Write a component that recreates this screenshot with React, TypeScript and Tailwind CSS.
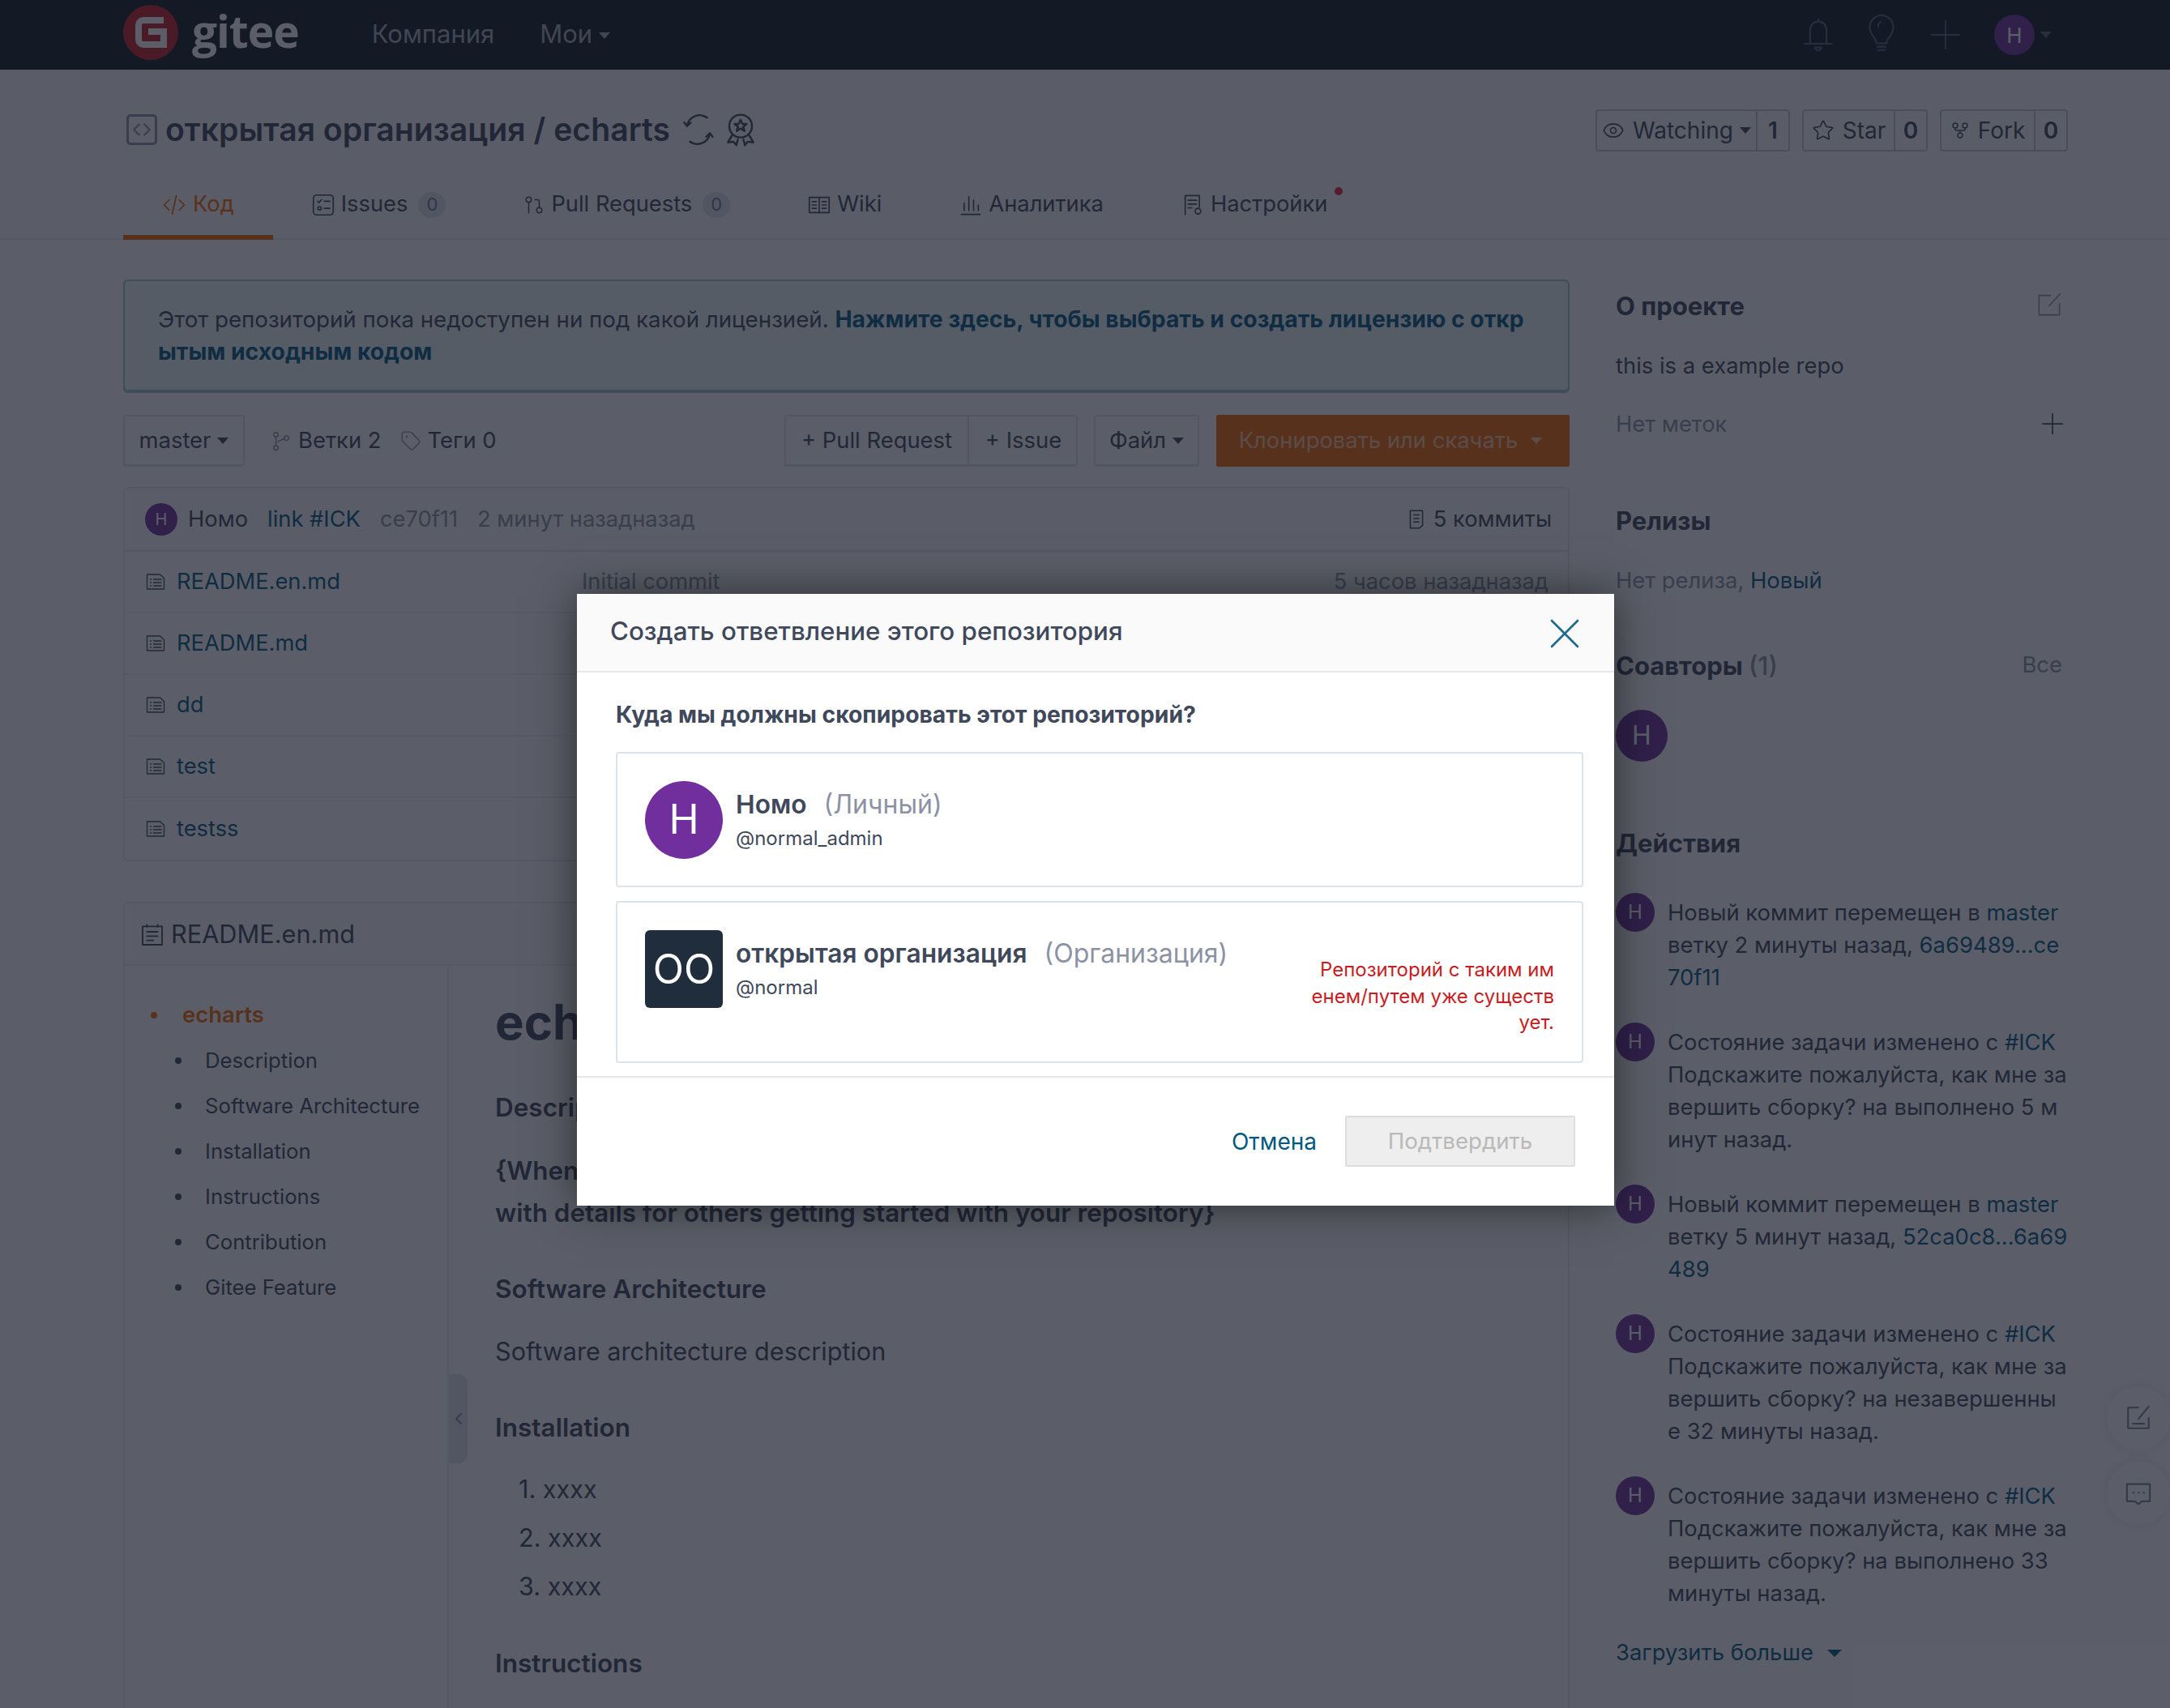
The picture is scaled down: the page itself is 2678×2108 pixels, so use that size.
import { ReactNode } from 'react';
import { Eye, GitFork, GitPullRequest, Plus, Star, Tag, X } from 'lucide-react';

const Svg = ({ className, children, stroke = 1.4 }: { className?: string; children: ReactNode; stroke?: number }) => (
  <svg viewBox="0 0 24 24" fill="none" stroke="currentColor" strokeWidth={stroke} strokeLinecap="round" strokeLinejoin="round" className={className}>
    {children}
  </svg>
);

const DocIcon = ({ className }: { className?: string }) => (
  <Svg className={className} stroke={1.3}>
    <path d="M1.500 3h16l5 4.500V21h-21z" />
    <path d="M5.500 9h1M5.500 13h1M5.500 17h1M9.500 9H19M9.500 13H19M9.500 17H19" />
  </Svg>
);

const Caret = ({ className }: { className?: string }) => (
  <span className={`inline-block h-0 w-0 border-x-[7px] border-t-[8px] border-x-transparent ${className ?? 'border-t-[#6b7280]'}`} />
);

const Avatar = ({ className }: { className: string }) => (
  <div className={`flex shrink-0 items-center justify-center rounded-full bg-[#702f9c] text-white ${className}`}>H</div>
);

const Logo = () => (
  <div className="-mt-[6px] flex items-center">
    <svg viewBox="0 0 68 68" className="h-[68px] w-[68px]">
      <circle cx="34" cy="34" r="34" fill="#c71d23" />
      <path d="M50 19H25a6 6 0 0 0-6 6v18a6 6 0 0 0 6 6h25V33H31" fill="none" stroke="#fff" strokeWidth="8" />
    </svg>
    <span className="-mt-[4px] ml-[17px] font-['Open_Sans'] text-[55px] leading-[68px] font-bold tracking-[-1px] text-white">gitee</span>
  </div>
);

const Header = () => (
  <header className="flex h-[86px] items-center bg-[#0f1c24] pl-[152px] pr-[146px]">
    <Logo />
    <span className="-mt-[2px] ml-[90px] text-[31px] text-[#a8aeba]">Компания</span>
    <span className="-mt-[2px] ml-[56px] flex items-center text-[31px] text-[#a8aeba]">
      Мои <Caret className="ml-[8px] mt-[4px] border-t-[#a8aeba]" />
    </span>
    <div className="ml-auto flex items-center text-[#58606e]">
      <Svg stroke={1.1} className="h-[44px] w-[44px]">
        <path d="M12 1.500v1.500M6.500 18V8.500a5.500 5.500 0 0 1 11 0V18M3 18h18M10 20.500a2 2 0 0 0 4 0z" />
      </Svg>
      <Svg stroke={1} className="ml-[31px] h-[50px] w-[50px]">
        <path d="M9 17c0-3-4-5-4-9.500a7 7 0 0 1 14 0C19 12 15 14 15 17zM9.500 19h5M10 21h4M10 7a2.500 2.500 0 0 1 1.500-2.500" />
      </Svg>
      <Plus strokeWidth={0.8} className="ml-[25px] h-[58px] w-[58px]" />
      <Avatar className="ml-[31px] h-[50px] w-[50px] text-[26px]" />
      <Caret className="ml-[7px] border-t-[#58606e]" />
    </div>
  </header>
);

const CountButton = ({ icon, label, count, caret, width }: { icon: ReactNode; label: string; count: string; caret?: boolean; width: string }) => (
  <div className={`flex h-[52px] items-stretch rounded-[4px] border-2 border-[#c5cad3] text-[28px] text-[#40485b] ${width}`}>
    <span className="flex flex-1 items-center justify-center gap-[10px]">
      {icon}
      {label}
      {caret && <Caret className="-ml-[2px] border-t-[#40485b]" />}
    </span>
    <span className="flex w-[40px] items-center justify-center border-l-2 border-[#c5cad3] font-semibold">{count}</span>
  </div>
);

const tabs: { label: string; count?: string; icon: ReactNode }[] = [
  { label: 'Код', icon: <Svg className="h-[30px] w-[30px]"><path d="M7 7l-5 5 5 5M17 7l5 5-5 5M14 3l-4 18" /></Svg> },
  {
    label: 'Issues',
    count: '0',
    icon: (
      <Svg className="h-[28px] w-[28px]">
        <rect x="1.500" y="1.500" width="21" height="21" rx="3.500" />
        <path d="M6 8l1.500 1.500L10 6.500M13 8h6M13 15.500h6" />
        <circle cx="8" cy="15.500" r="1.800" />
      </Svg>
    ),
  },
  { label: 'Pull Requests', count: '0', icon: <GitPullRequest strokeWidth={1.4} className="h-[26px] w-[26px]" /> },
  {
    label: 'Wiki',
    icon: (
      <Svg className="h-[28px] w-[28px]">
        <path d="M1.500 4h21v16h-21zM12 4v16M4.500 8.500h4.500M4.500 12h4.500M4.500 15.500h4.500M15 8.500h4.500M15 12h4.500M15 15.500h4.500" />
      </Svg>
    ),
  },
  { label: 'Аналитика', icon: <Svg className="h-[28px] w-[28px]"><path d="M2 22h20M5 18V10M10 18V3M15 18V7M20 18v-6" /></Svg> },
  {
    label: 'Настройки',
    icon: (
      <Svg className="h-[28px] w-[28px]">
        <path d="M4 22V2h15v12M7 7h9M7 11h9M7 15h4" />
        <circle cx="17.500" cy="18.500" r="3" />
      </Svg>
    ),
  },
];

const RepoHead = () => (
  <section className="h-[210px] border-b-2 border-[#e3e9ed] bg-[#fafbfc] px-[126px]">
    <div className="flex h-[124px] items-start justify-between pl-[30px] pt-[49px]">
      <div className="-mt-[1px] flex items-center text-[#40485b]">
        <span className="flex h-[38px] w-[38px] items-center justify-center rounded-[5px] border-[3px] border-[#8c92a4] bg-[#fafbfc] text-[#8c92a4]">
          <Svg className="h-[26px] w-[26px]"><path d="M9 6l-6 6 6 6M15 6l6 6-6 6" strokeWidth="2" /></Svg>
        </span>
        <h1 className="ml-[10px] text-[39.200px] leading-[52px] font-semibold">открытая организация / echarts</h1>
        <Svg className="ml-[14px] h-[42px] w-[42px]"><path d="M4 9a9 9 0 0 1 14-5.500M20 15a9 9 0 0 1-14 5.500M2 7l2 2.500L6.500 7M22 17l-2-2.500L17.500 17" /></Svg>
        <Svg className="ml-[10px] h-[42px] w-[42px]">
          <circle cx="12" cy="9.500" r="8" />
          <path d="M12 5l1.300 3h3l-2.500 2 1 3-2.800-1.800L9.200 13l1-3-2.500-2h3zM6 16l-3 5 4-.5 2 2.500 1-4M18 16l3 5-4-.5-2 2.500-1-4" />
        </Svg>
      </div>
      <div className="flex gap-[15px]">
        <CountButton width="w-[240px]" icon={<Eye strokeWidth={1.4} className="h-[28px] w-[28px]" />} label="Watching" count="1" caret />
        <CountButton width="w-[155px]" icon={<Star strokeWidth={1.4} className="h-[28px] w-[28px]" />} label="Star" count="0" />
        <CountButton width="w-[158px]" icon={<GitFork strokeWidth={1.4} className="h-[24px] w-[24px]" />} label="Fork" count="0" />
      </div>
    </div>
    <nav className="ml-[26px] flex h-[86px]">
      {tabs.map((tab, i) => (
        <div
          key={tab.label}
          className={`relative flex items-center gap-[8px] border-b-[6px] px-[48px] pt-[5px] text-[27.300px] ${i === 0 ? 'border-[#f56a00] text-[#f56a00]' : 'border-transparent text-[#40485b]'}`}
        >
          {tab.icon}
          {tab.label}
          {tab.count && <span className="ml-[5px] flex h-[32px] w-[34px] items-center justify-center rounded-full bg-[#dfe3e9] text-[22px] text-[#6a7a9c]">{tab.count}</span>}
          {tab.label === 'Настройки' && <span className="absolute right-[29px] top-[21px] h-[10px] w-[10px] rounded-full bg-[#e8262d]" />}
        </div>
      ))}
    </nav>
  </section>
);

const files = ['README.en.md', 'README.md', 'dd', 'test', 'testss'];

const FileTable = () => (
  <div className="mt-[25px] rounded-[6px] border-2 border-[#e3e9ed] bg-white text-[27.300px]">
    <div className="flex h-[78px] items-center border-b-2 border-[#e3e9ed] bg-[#fafbfc] pl-[25px] pr-[20px]">
      <Avatar className="h-[40px] w-[40px] text-[20px]" />
      <span className="ml-[13px] text-[#40485b]">Номо</span>
      <span className="ml-[24px] text-[#005980]">link #ICK</span>
      <span className="ml-[24px] text-[#8c92a4]">ce70f11</span>
      <span className="ml-[24px] text-[#8c92a4]">2 минут назадназад</span>
      <span className="ml-auto flex items-center gap-[8px] text-[#40485b]">
        <Svg className="h-[30px] w-[26px]"><path d="M5 2h14v17l-4 3H5zM9 7h6M9 11h6M9 15h6" /></Svg>
        5 коммиты
      </span>
    </div>
    {files.map((name, i) => (
      <div key={name} className={`flex h-[76px] items-center pl-[26px] pr-[24px] ${i < files.length - 1 ? 'border-b-2 border-[#eef1f4]' : ''}`}>
        <DocIcon className="h-[26px] w-[24px] text-[#40485b]" />
        <span className="ml-[14px] w-[500px] text-[#005980]">{name}</span>
        <span className="text-[#8c92a4]">Initial commit</span>
        <span className="ml-auto text-[#8c92a4]">5 часов назадназад</span>
      </div>
    ))}
  </div>
);

const toc = ['Description', 'Software Architecture', 'Installation', 'Instructions', 'Contribution', 'Gitee Feature'];

const Readme = () => (
  <div className="mt-[50px] rounded-t-[6px] border-x-2 border-t-2 border-[#e3e9ed] bg-white">
    <div className="flex h-[77px] items-center border-b-2 border-[#e3e9ed] bg-[#fafbfc] pl-[18px] pt-[2px] text-[30.700px] text-[#40485b]">
      <Svg className="h-[32px] w-[32px]"><path d="M3 4h18v17H3zM7 2.500v2M17 2.500v2M7 9h10M7 13h10M7 17h6" /></Svg>
      <span className="ml-[7px]">README.en.md</span>
    </div>
    <div className="relative flex">
      <aside className="h-[940px] w-[400px] shrink-0 border-r-2 border-[#e3e9ed] pt-[33px]">
        <div className="flex h-[56px] items-center pl-[32px] text-[27.500px] font-semibold text-[#f56a00]">
          <span className="mr-[31px] h-[8px] w-[8px] rounded-full bg-[#f56a00]" />
          echarts
        </div>
        {toc.map((item) => (
          <div key={item} className="flex h-[56px] items-center pl-[62px] text-[25.700px] text-[#40485b]">
            <span className="mr-[29px] h-[8px] w-[8px] rounded-full bg-[#40485b]" />
            {item}
          </div>
        ))}
      </aside>
      <span className="absolute left-[400px] top-[504px] flex h-[110px] w-[23px] items-center justify-center rounded-r-[12px] bg-[#dde4ea] text-[#8c92a4]">
        <Svg className="h-[22px] w-[18px]"><path d="M16 4l-8 8 8 8" strokeWidth="3" /></Svg>
      </span>
      <article className="pl-[57px] text-[#40485b]">
        <h2 className="mt-[33px] text-[60px] leading-[72px] font-bold">echarts</h2>
        <h3 className="mt-[46px] text-[31.500px] leading-[48px] font-semibold">Description</h3>
        <p className="mt-[28px] w-[1280px] text-[31.400px] leading-[52px] font-semibold">
          {'{When you\'re building this project, please write a description of it'}
          <br />
          with details for others getting started with your repository{'}'}
        </p>
        <h3 className="mt-[44px] text-[31.500px] leading-[48px] font-semibold">Software Architecture</h3>
        <p className="mt-[29px] text-[30.600px] leading-[48px]">Software architecture description</p>
        <h3 className="mt-[46px] text-[31.500px] leading-[48px] font-semibold">Installation</h3>
        <ol className="mt-[28px] flex flex-col gap-[12px] pl-[29px] text-[30.600px] leading-[48px]">
          <li>1. xxxx</li>
          <li>2. xxxx</li>
          <li>3. xxxx</li>
        </ol>
        <h3 className="mt-[47px] text-[31.500px] leading-[48px] font-semibold">Instructions</h3>
      </article>
    </div>
  </div>
);

const Link = ({ children }: { children: ReactNode }) => <span className="text-[#005980]">{children}</span>;

const activity: ReactNode[] = [
  <>Новый коммит перемещен в <Link>master</Link> ветку 2 минуты назад, <Link>6a69489...ce70f11</Link></>,
  <>Состояние задачи изменено с <Link>#ICK</Link> Подскажите пожалуйста, как мне завершить сборку? на выполнено 5 минут назад.</>,
  <>Новый коммит перемещен в <Link>master</Link> ветку 5 минут назад, <Link>52ca0c8...6a69489</Link></>,
  <>Состояние задачи изменено с <Link>#ICK</Link> Подскажите пожалуйста, как мне завершить сборку? на незавершенные 32 минуты назад.</>,
  <>Состояние задачи изменено с <Link>#ICK</Link> Подскажите пожалуйста, как мне завершить сборку? на выполнено 33 минуты назад.</>,
];

const Sidebar = () => (
  <aside className="ml-[57px] w-[558px] shrink-0 text-[27.400px] leading-[40px] text-[#40485b]">
    <div className="mt-[13px] flex items-center justify-between pr-[7px]">
      <h4 className="text-[31px] font-bold">О проекте</h4>
      <Svg stroke={1.2} className="-mt-[4px] h-[32px] w-[32px] text-[#8c92a4]"><path d="M13 3.500H2.500v18h19V11M22 2L12 13" /></Svg>
    </div>
    <p className="mt-[33px]">this is a example repo</p>
    <div className="mt-[32px] flex h-[40px] items-center justify-between text-[#8c92a4]">
      Нет меток
      <Plus strokeWidth={1} className="-mr-[2px] h-[42px] w-[42px] text-[#40485b]" />
    </div>
    <h4 className="mt-[80px] text-[31px] font-bold">Релизы</h4>
    <p className="mt-[33px] text-[#8c92a4]">
      Нет релиза, <Link>Новый</Link>
    </p>
    <div className="mt-[66px] flex justify-between pr-[7px]">
      <h4 className="text-[31px] font-bold">
        Соавторы <span className="font-medium text-[#8c92a4]">(1)</span>
      </h4>
      <span className="-mt-[2px] text-[#8c92a4]">Все</span>
    </div>
    <Avatar className="mt-[34px] h-[64px] w-[64px] text-[32px]" />
    <h4 className="mt-[81px] text-[31px] font-bold">Действия</h4>
    <div className="mt-[41px] flex flex-col gap-[36px]">
      {activity.map((item, i) => (
        <div key={i} className="flex items-start">
          <Avatar className="h-[48px] w-[48px] text-[24px]" />
          <p className="ml-[16px] mt-[4px] w-[494px] break-all">{item}</p>
        </div>
      ))}
    </div>
    <div className="mt-[33px] flex items-center gap-[17px] text-[#005980]">
      Загрузить больше <span className="mt-[2px] h-0 w-0 border-x-[9px] border-t-[9px] border-x-transparent border-t-[#005980]" />
    </div>
  </aside>
);

const FloatingButtons = () => (
  <div className="absolute right-0 top-[1711px] flex flex-col gap-[15px] text-[#7d8496]">
    <div className="flex h-[78px] w-[78px] items-center justify-center rounded-full bg-white shadow-[0_0_20px_rgba(0,0,0,.08)]">
      <Svg className="h-[34px] w-[34px]" stroke={1.5}><path d="M12 3H3v18h18v-9M21 2l-9 11M7 17h10" /></Svg>
    </div>
    <div className="flex h-[78px] w-[78px] items-center justify-center rounded-full bg-white shadow-[0_0_20px_rgba(0,0,0,.08)]">
      <Svg className="h-[34px] w-[34px]" stroke={1.5}><path d="M2 4h20v15h-7l-3 2.500L9 19H2zM7.500 11.500h.5M12 11.500h.5M16.500 11.500h.5" /></Svg>
    </div>
  </div>
);

const Account = ({ avatar, name, kind, login, error }: { avatar: ReactNode; name: string; kind: string; login: string; error?: string }) => (
  <div className={`flex rounded-[4px] border-2 border-[#dce3e9] pl-[34px] pr-[34px] ${error ? 'h-[200px] pt-[34px]' : 'h-[167px] items-center'}`}>
    {avatar}
    <div className={`ml-[16px] ${error ? 'mt-[7px]' : '-mt-[1px]'}`}>
      <div className="flex items-center text-[32px] leading-[44px]">
        <span className="text-[31.700px] font-semibold text-[#40485b]">{name}</span>
        <span className="ml-[21px] text-[#8c92a4]">{kind}</span>
      </div>
      <div className="mt-[4px] text-[24px] leading-[32px] text-[#40485b]">{login}</div>
    </div>
    {error && <p className="ml-auto mt-[33px] w-[300px] break-all text-right text-[24px] leading-[32.500px] text-[#c71d23]">{error}</p>}
  </div>
);

const ForkModal = () => (
  <div className="absolute left-[712px] top-[733px] h-[755px] w-[1280px] bg-white shadow-[0_0_50px_rgba(0,0,0,.5)]">
    <div className="flex h-[97px] items-center justify-between border-b-2 border-[#e3e9ed] bg-[#fafafa] pl-[41px] pr-[29px]">
      <h2 className="-mt-[3px] text-[31.300px] font-medium text-[#40485b]">Создать ответвление этого репозитория</h2>
      <X strokeWidth={1} className="mt-[3px] h-[64px] w-[64px] text-[#1d6a8c]" />
    </div>
    <div className="px-[48px]">
      <p className="mt-[32px] text-[28.300px] leading-[40px] font-bold text-[#40485b]">Куда мы должны скопировать этот репозиторий?</p>
      <div className="mt-[26px] mr-[-10px] flex flex-col gap-[17px]">
        <Account
          avatar={<Avatar className="h-[96px] w-[96px] text-[50px]" />}
          name="Номо"
          kind="(Личный)"
          login="@normal_admin"
        />
        <Account
          avatar={<div className="flex h-[96px] w-[96px] shrink-0 items-center justify-center rounded-[6px] bg-[#1f2d3d] text-[50px] text-white">OO</div>}
          name="открытая организация"
          kind="(Организация)"
          login="@normal"
          error="Репозиторий с таким именем/путем уже существует."
        />
      </div>
    </div>
    <div className="mt-[16px] flex h-[159px] items-center justify-end border-t-2 border-[#e3e9ed] pr-[48px]">
      <span className="text-[28px] text-[#005980]">Отмена</span>
      <span className="ml-[35px] flex h-[63px] w-[284px] items-center justify-center rounded-[2px] border-2 border-[#dedede] bg-[#eeeeee] text-[27.600px] text-[#b9b9b9]">Подтвердить</span>
    </div>
  </div>
);

export default function App() {
  return (
    <div className="relative h-[2108px] w-[2678px] overflow-hidden bg-white font-[Inter,sans-serif]">
      <Header />
      <RepoHead />
      <main className="flex pl-[152px] pt-[49px]">
        <div className="w-[1785px] shrink-0">
          <div className="h-[138px] rounded-[6px] border-2 border-[#9fc6d2] bg-[#e9f8f8] py-[27px] pl-[41px] pr-[40px] text-[27.700px] leading-[40px] break-all text-[#40485b] shadow-[0_2px_0_#9fc6d2]">
            Этот репозиторий пока недоступен ни под какой лицензией. <b className="text-[28.300px] font-bold text-[#005980]">Нажмите здесь, чтобы выбрать и создать лицензию с открытым исходным кодом</b>
          </div>
          <div className="mt-[29px] flex h-[64px] items-stretch text-[27.400px] text-[#40485b]">
            <span className="flex w-[150px] items-center justify-center gap-[8px] rounded-[4px] border-2 border-b-[3px] border-[#dce3e9]">
              master <Caret className="border-t-[#40485b]" />
            </span>
            <span className="ml-[32px] flex items-center gap-[8px]">
              <Svg className="h-[30px] w-[26px] text-[#8c92a4]"><circle cx="6" cy="5" r="2.500" /><circle cx="6" cy="20" r="2.500" /><circle cx="18" cy="9" r="2.500" /><path d="M6 7.500v10M15.500 9.500L8 13" /></Svg>
              Ветки 2
            </span>
            <span className="ml-[23px] flex items-center gap-[8px]">
              <Tag strokeWidth={1.3} className="h-[26px] w-[26px] text-[#8c92a4]" />
              Теги 0
            </span>
            <span className="ml-auto flex rounded-[4px] border-2 border-b-[3px] border-[#dce3e9]">
              <span className="flex w-[226px] items-center justify-center border-r-2 border-[#dce3e9]">+ Pull Request</span>
              <span className="flex w-[132px] items-center justify-center pl-[2px]">+ Issue</span>
            </span>
            <span className="ml-[20px] flex w-[130px] items-center justify-center gap-[8px] rounded-[4px] border-2 border-b-[3px] border-[#dce3e9]">
              Файл <Caret className="border-t-[#40485b]" />
            </span>
            <span className="ml-[21px] flex w-[436px] items-center justify-center gap-[16px] rounded-[2px] bg-[#f56a00] pr-[6px] text-white/60">
              Клонировать или скачать <Caret className="border-t-white/60" />
            </span>
          </div>
          <FileTable />
          <Readme />
        </div>
        <Sidebar />
      </main>
      <FloatingButtons />
      <div className="absolute inset-0 bg-[#161928]/70" />
      <ForkModal />
    </div>
  );
}
